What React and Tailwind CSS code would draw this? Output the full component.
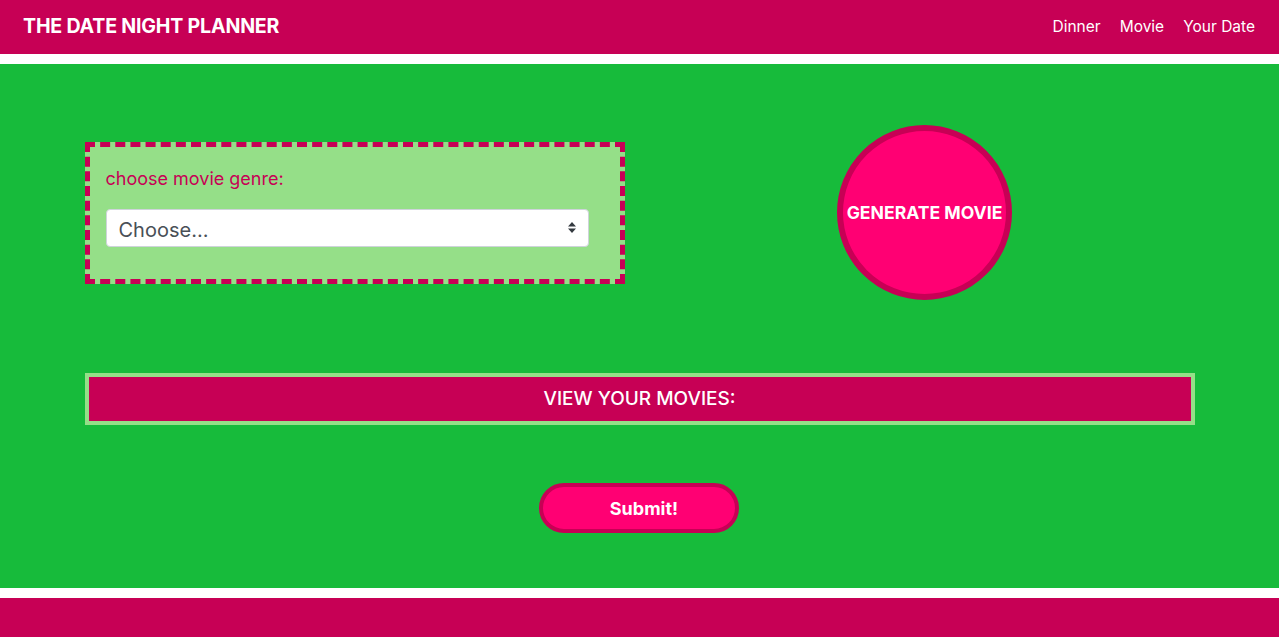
export default function App() {
  return (
    <div className="min-h-screen bg-white" style={{ fontFamily: "Inter, 'Liberation Sans', sans-serif" }}>
      <nav className="flex h-[54px] items-center justify-between bg-[#c70055] pl-[23px] pr-[24px] text-white">
        <div className="text-[19.6px] font-bold tracking-[-0.2px]">THE DATE NIGHT PLANNER</div>
        <div className="flex items-center gap-[19px] text-[15.5px]">
          <a>Dinner</a>
          <a>Movie</a>
          <a>Your Date</a>
        </div>
      </nav>
      <main className="mt-[10px] bg-[#17bb3b] pt-[61px] pb-[55px]">
        <div className="mx-auto w-[1110px]">
          <div className="flex items-center">
            <div className="w-[540px]">
              <div className="h-[142px] border-[5px] border-dashed border-[#c70055] bg-[#95df88] pl-4 pt-[18px]">
                <div className="text-[18px] leading-[27px] text-[#c70055]">choose movie genre:</div>
                <div className="relative mt-[17px] h-[38px] w-[483px]">
                  <select className="h-full w-full appearance-none rounded-[4px] border border-[#ced4da] bg-white pl-3 pt-[4px] text-[20px] text-[#495057] outline-none">
                    <option>Choose...</option>
                  </select>
                  <svg className="pointer-events-none absolute right-[13px] top-[13px]" width="8" height="11" viewBox="0 0 8 11">
                    <path d="M4 0 L8 4.5 H0 Z M0 6.5 H8 L4 11 Z" fill="#343a40" />
                  </svg>
                </div>
              </div>
            </div>
            <div className="flex flex-1 justify-center pl-[30px]">
              <button className="flex h-[175px] w-[175px] items-center justify-center rounded-full border-[6px] border-[#c70055] bg-[#ff0073] pt-[1px] text-[17.6px] font-bold text-white">
                GENERATE MOVIE
              </button>
            </div>
          </div>
          <div className="mt-[73px] flex h-[52px] items-center justify-center border-4 border-[#95df88] bg-[#c70055] text-[19px] font-medium text-white">
            VIEW YOUR MOVIES:
          </div>
          <div className="mt-[58px] flex justify-center">
            <button className="-ml-px h-[50px] w-[200px] rounded-full border-4 border-[#c70055] bg-[#ff0073] pl-[10px] text-[18px] font-bold text-white">
              Submit!
            </button>
          </div>
        </div>
      </main>
      <footer className="mt-[10px] h-[39px] bg-[#c70055]" />
    </div>
  );
}
